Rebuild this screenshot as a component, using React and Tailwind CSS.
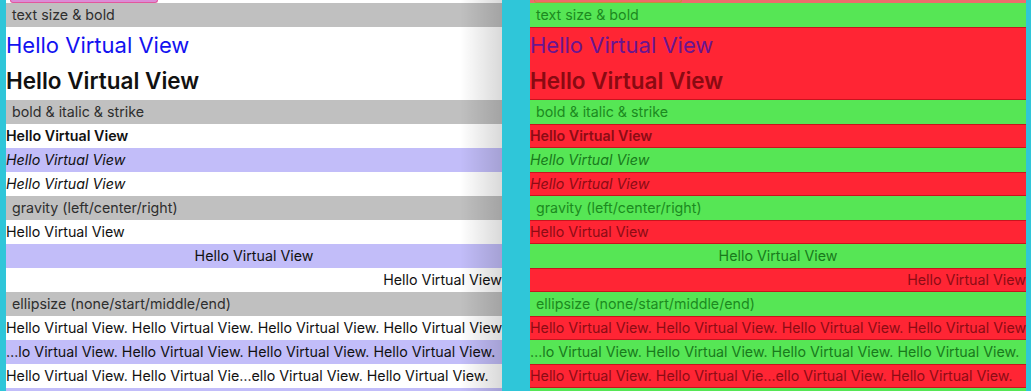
import React from "react";

const LINE = "Hello Virtual View";
const LONG = "Hello Virtual View. Hello Virtual View. Hello Virtual View. Hello Virtual View. Hello Virtual View.";

const themes = {
  left: {
    top: "bg-white",
    pill: "bg-[#dc8cd6] border-[#e2589c]",
    header: "bg-[#c0c0c0] text-[#2e2e2e]",
    plain: "bg-white text-[#111]",
    alt: "bg-[#c2bdf9] text-[#111]",
    big: "bg-white",
    blue: "text-[#1212f0]",
    bold: "text-[#111]",
  },
  right: {
    top: "bg-[#ee6c6c]",
    pill: "bg-[#f06a6a] border-[#c98a3a]",
    header: "bg-[#56e655] text-[#1c8a1f]",
    plain: "bg-[#ff2534] text-[#8c0c14] border-y border-[#c8141e]",
    alt: "bg-[#56e655] text-[#197a1c]",
    big: "bg-[#ff2534] border-y border-[#c8141e]",
    blue: "text-[#6a1590]",
    bold: "text-[#8a0a12]",
  },
};

const Header = ({ t, children }) => (
  <div className={`h-[24px] flex items-center pl-[6px] text-[14.25px] ${t.header}`}>
    {children}
  </div>
);

const Row = ({ t, alt, className = "", children }) => (
  <div
    className={`h-[24px] flex items-center whitespace-nowrap overflow-hidden text-[14.25px] ${
      alt ? t.alt : t.plain
    } ${className}`}
  >
    {children}
  </div>
);

const Panel = ({ side }) => {
  const t = themes[side];
  return (
    <div className="relative w-[496px] h-[391px] overflow-hidden shrink-0">
      {/* button peeking at the top */}
      <div className={`h-[3px] ${t.top}`}>
        <div className={`ml-[4px] w-[148px] h-[3px] rounded-b-full border-x border-b ${t.pill}`} />
      </div>

      <Header t={t}>text size &amp; bold</Header>
      <div className={`h-[73px] flex flex-col justify-center ${t.big}`}>
        <div className={`h-[35px] flex items-center text-[22px] ${t.blue}`}>{LINE}</div>
        <div className={`h-[36px] flex items-center text-[22.5px] font-semibold ${t.bold}`}>{LINE}</div>
      </div>

      <Header t={t}>bold &amp; italic &amp; strike</Header>
      <Row t={t} className="font-semibold">{LINE}</Row>
      <Row t={t} alt className="italic">{LINE}</Row>
      <Row t={t} className="italic">{LINE}</Row>

      <Header t={t}>gravity (left/center/right)</Header>
      <Row t={t}>{LINE}</Row>
      <Row t={t} alt className="justify-center">{LINE}</Row>
      <Row t={t} className="justify-end">{LINE}</Row>

      <Header t={t}>ellipsize (none/start/middle/end)</Header>
      <Row t={t}>{LONG}</Row>
      <Row t={t} alt>…lo Virtual View. Hello Virtual View. Hello Virtual View. Hello Virtual View.</Row>
      <Row t={t}>Hello Virtual View. Hello Virtual Vie…ello Virtual View. Hello Virtual View.</Row>
      <Row t={t} alt>Hello Virtual View. Hello Virtual View. Hello Virtual View. Hello Virt…</Row>

      {side === "left" && (
        <div className="absolute top-0 right-0 w-[42px] h-full bg-gradient-to-r from-transparent to-black/15 pointer-events-none" />
      )}
    </div>
  );
};

export default function App() {
  return (
    <div
      className="w-[1031px] h-[391px] bg-[#2fc6d9] flex pl-[6px] gap-[28px] overflow-hidden"
      style={{ fontFamily: "Inter, 'Noto Sans', sans-serif" }}
    >
      <Panel side="left" />
      <Panel side="right" />
    </div>
  );
}
